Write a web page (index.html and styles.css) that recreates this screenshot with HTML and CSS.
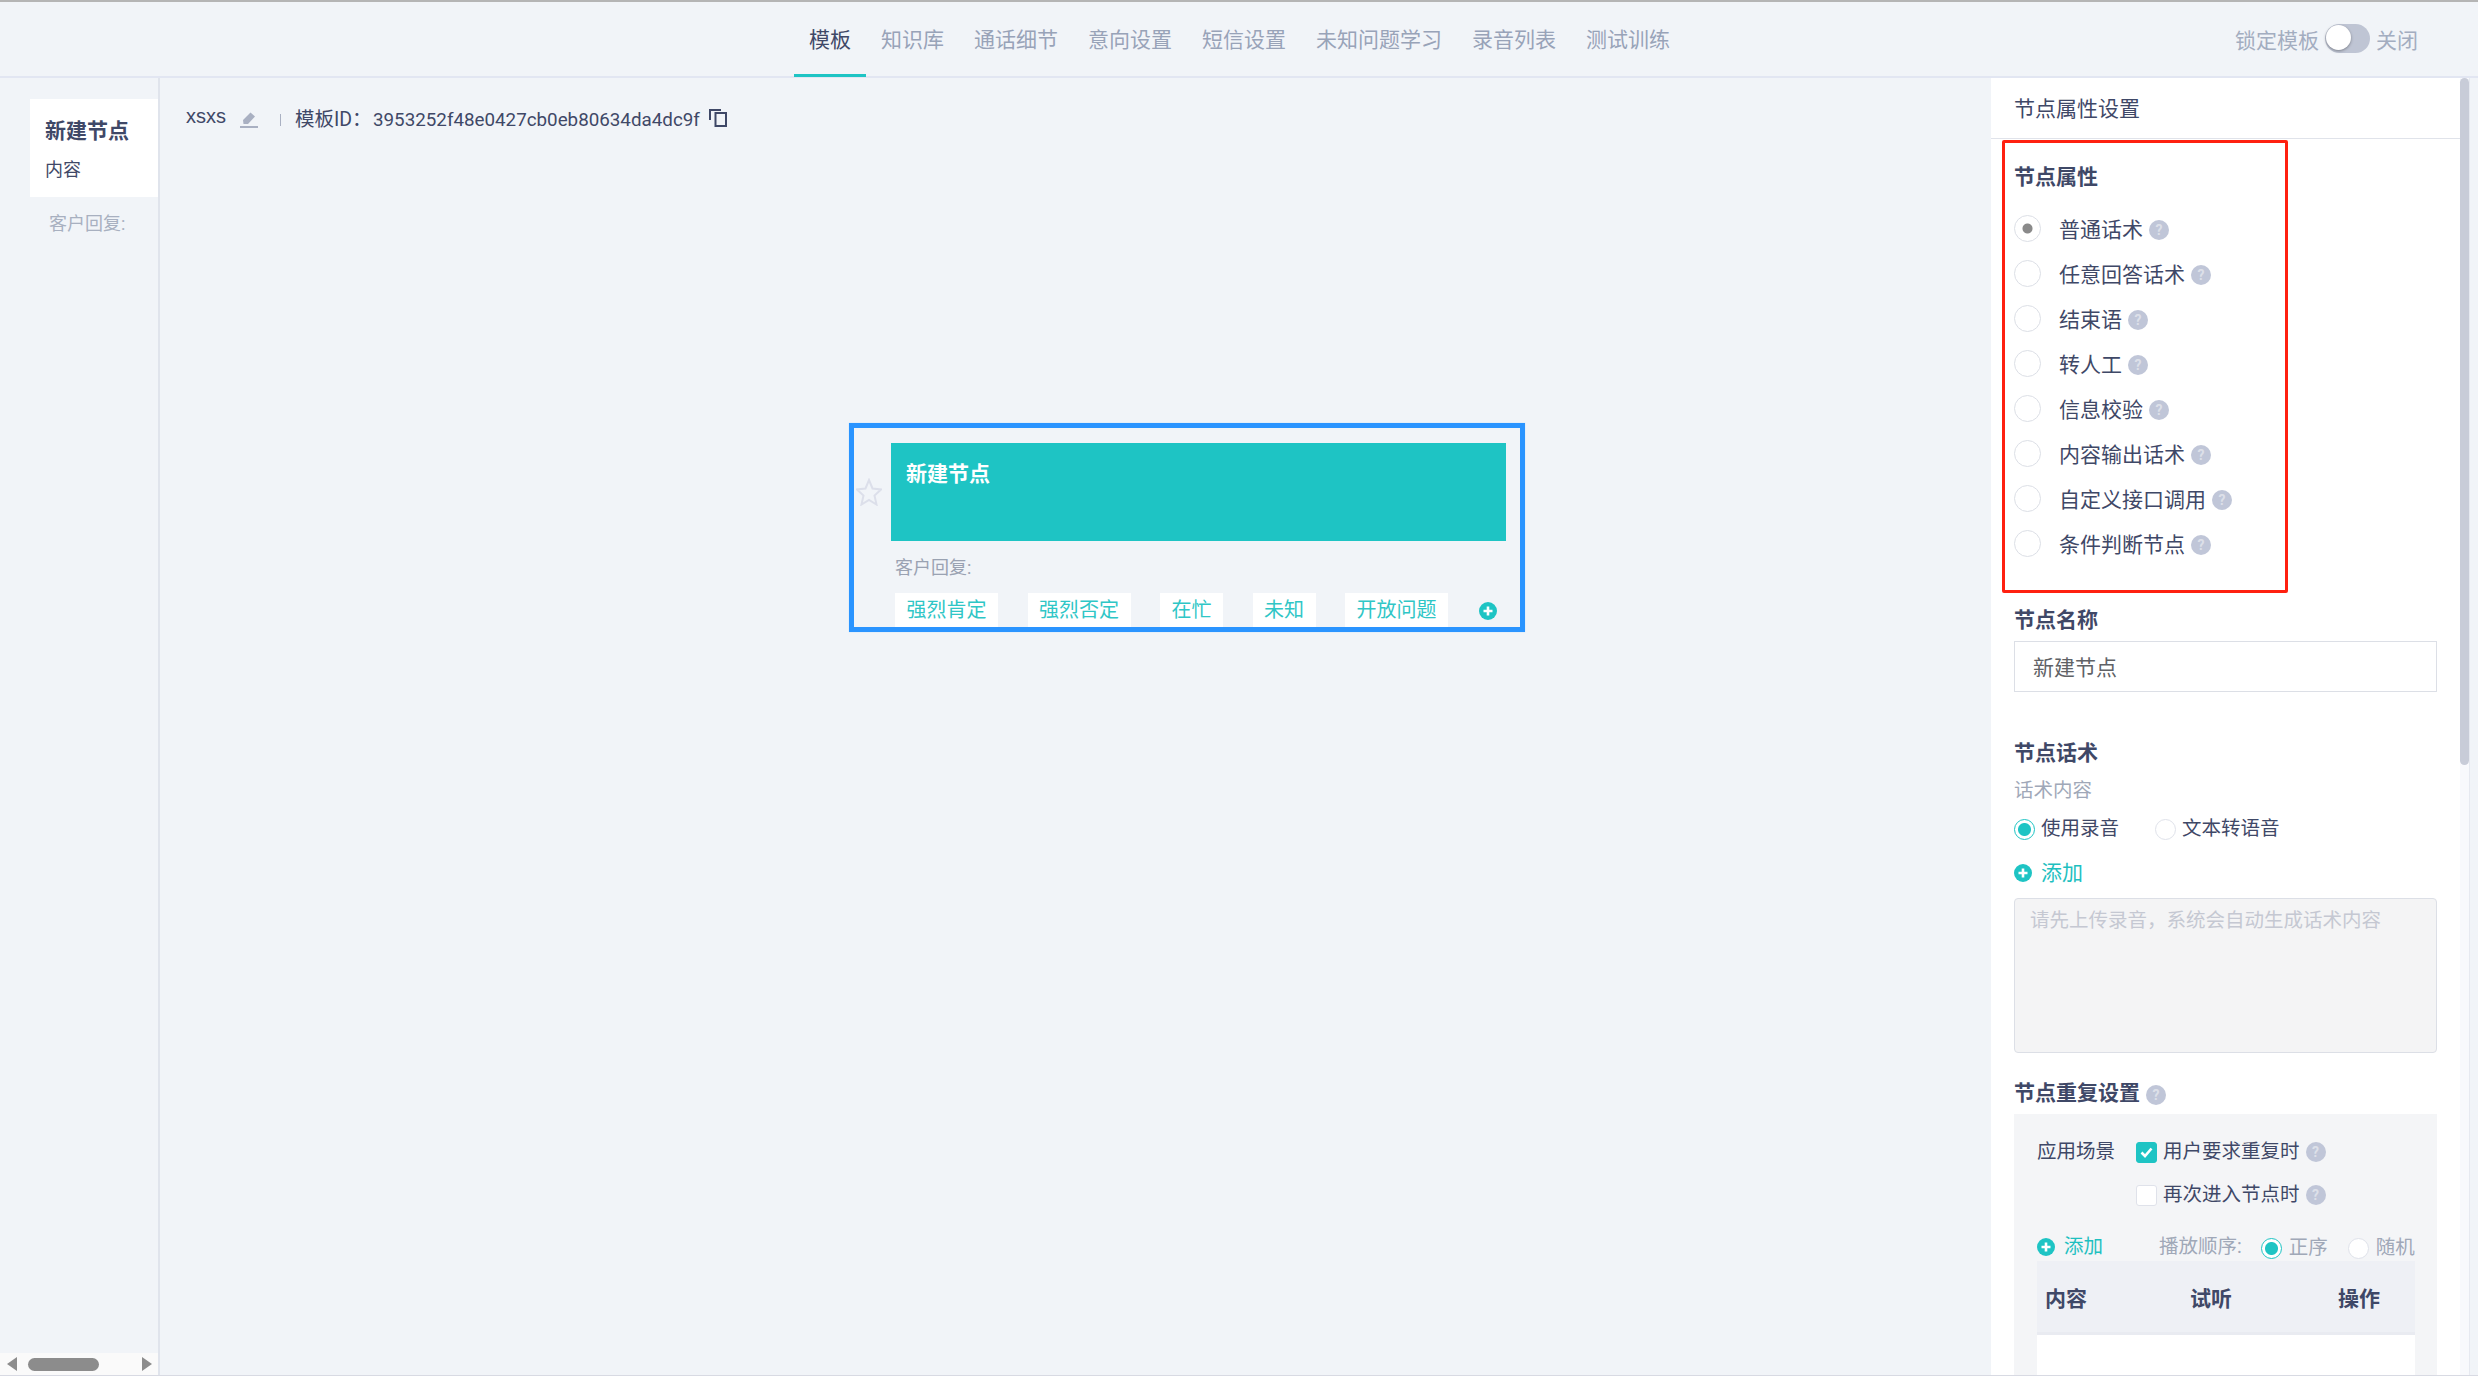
FILE: index.html
```html
<!DOCTYPE html>
<html lang="zh-CN">
  <head>
    <meta charset="UTF-8" />
    <title>模板</title>
    <link rel="stylesheet" href="styles.css">
  </head>
  <body>
    <div class="app">
      <!-- top tabs -->
      <header class="topbar">
        <nav class="tabs">
          <a class="tab active">模板</a>
          <a class="tab">知识库</a>
          <a class="tab">通话细节</a>
          <a class="tab">意向设置</a>
          <a class="tab">短信设置</a>
          <a class="tab">未知问题学习</a>
          <a class="tab">录音列表</a>
          <a class="tab">测试训练</a>
        </nav>
        <div class="lock">
          <span>锁定模板</span>
          <span class="switch"><i class="knob"></i></span>
          <span>关闭</span>
        </div>
      </header>

      <main class="main">
        <!-- node outline -->
        <aside class="sidebar">
          <div class="side-card">
            <div class="side-title">新建节点</div>
            <div class="side-sub">内容</div>
          </div>
          <div class="side-reply">客户回复:</div>
          <div class="hscroll">
            <svg class="arrow" width="10" height="14" viewBox="0 0 10 14"><path d="M10 0V14L0 7Z" /></svg>
            <i class="hscroll-thumb"></i>
            <svg class="arrow" width="10" height="14" viewBox="0 0 10 14"><path d="M0 0V14L10 7Z" /></svg>
          </div>
        </aside>

        <!-- flow canvas -->
        <section class="canvas">
          <div class="canvas-head">
            <span class="tpl-name">xsxs</span>
            <svg class="edit-icon" width="18" height="16" viewBox="0 0 18 16"><path d="M10.5 0.5 15 4.5 8 12H3.5L3 8ZM0 14H18V16H0Z" /></svg>
            <i class="head-divider"></i>
            <span class="tpl-id">模板ID：</span>
            <span class="tpl-hash">3953252f48e0427cb0eb80634da4dc9f</span>
            <svg class="copy-icon" width="18" height="18" viewBox="0 0 18 18"><path d="M1 11V1H12M6.5 4H17V17H6.5Z" /></svg>
          </div>

          <div class="node">
            <svg class="node-star" width="26" height="28" viewBox="0 0 26 28"><path d="M13 2 16.5 10.5 25 11.5 18.5 17.5 20.5 26.5 13 22 5.5 26.5 7.5 17.5 1 11.5 9.5 10.5Z" /></svg>
            <div class="node-head">新建节点</div>
            <div class="node-label">客户回复:</div>
            <div class="node-chips">
              <span class="chip">强烈肯定</span>
              <span class="chip">强烈否定</span>
              <span class="chip">在忙</span>
              <span class="chip">未知</span>
              <span class="chip">开放问题</span>
              <svg class="plus-icon chip-add" viewBox="0 0 18 18"><circle cx="9" cy="9" r="9" /><path d="M9 4.5V13.5M4.5 9H13.5" /></svg>
            </div>
          </div>
        </section>

        <!-- property panel -->
        <aside class="panel">
          <div class="panel-body">
            <div class="panel-title">节点属性设置</div>

            <div class="attr-box">
              <h3 class="sec-title">节点属性</h3>
              <ul class="attr-list">
                <li class="attr-row"><i class="attr-radio checked"></i>普通话术<i class="help">?</i></li>
                <li class="attr-row"><i class="attr-radio"></i>任意回答话术<i class="help">?</i></li>
                <li class="attr-row"><i class="attr-radio"></i>结束语<i class="help">?</i></li>
                <li class="attr-row"><i class="attr-radio"></i>转人工<i class="help">?</i></li>
                <li class="attr-row"><i class="attr-radio"></i>信息校验<i class="help">?</i></li>
                <li class="attr-row"><i class="attr-radio"></i>内容输出话术<i class="help">?</i></li>
                <li class="attr-row"><i class="attr-radio"></i>自定义接口调用<i class="help">?</i></li>
                <li class="attr-row"><i class="attr-radio"></i>条件判断节点<i class="help">?</i></li>
              </ul>
            </div>

            <div class="form-part name-part">
              <h3 class="sec-title">节点名称</h3>
              <div class="text-input">新建节点</div>
            </div>

            <div class="form-part speech-part">
              <h3 class="sec-title">节点话术</h3>
              <div class="field-label">话术内容</div>
              <div class="radio-row">
                <label class="radio-item"><i class="radio on"></i>使用录音</label>
                <label class="radio-item"><i class="radio"></i>文本转语音</label>
              </div>
              <a class="add-link">
                <svg class="plus-icon" viewBox="0 0 18 18"><circle cx="9" cy="9" r="9" /><path d="M9 4.5V13.5M4.5 9H13.5" /></svg>
                添加
              </a>
              <div class="text-area">请先上传录音，系统会自动生成话术内容</div>
            </div>

            <div class="form-part repeat-part">
              <h3 class="sec-title">节点重复设置<i class="help">?</i></h3>
              <div class="repeat-box">
                <div class="check-row">
                  <span class="check-label">应用场景</span>
                  <i class="checkbox on">
                    <svg width="13" height="11" viewBox="0 0 13 11"><path d="M1.5 5.5 5 9 11.5 1.5" /></svg>
                  </i>
                  用户要求重复时<i class="help">?</i>
                </div>
                <div class="check-row second">
                  <i class="checkbox"></i>
                  再次进入节点时<i class="help">?</i>
                </div>
                <div class="play-row">
                  <a class="add-link small">
                    <svg class="plus-icon" viewBox="0 0 18 18"><circle cx="9" cy="9" r="9" /><path d="M9 4.5V13.5M4.5 9H13.5" /></svg>
                    添加
                  </a>
                  <span class="play-label">播放顺序:</span>
                  <label class="radio-item muted"><i class="radio on"></i>正序</label>
                  <label class="radio-item muted"><i class="radio"></i>随机</label>
                </div>
                <table class="repeat-table">
                  <thead>
                    <tr><th class="col-content">内容</th><th class="col-listen">试听</th><th>操作</th></tr>
                  </thead>
                  <tbody>
                    <tr><td colspan="3"></td></tr>
                  </tbody>
                </table>
              </div>
            </div>
          </div>
          <div class="vscroll"><i class="vscroll-thumb"></i></div>
        </aside>
      </main>
    </div>
  </body>
</html>
```

FILE: styles.css
```css
* {
  box-sizing: border-box;
}
html,
body {
  margin: 0;
  height: 100%;
  overflow: hidden;
}
body {
  font-family: Roboto, "Noto Sans CJK SC", sans-serif;
  font-size: 20px;
  color: #3f4867;
  background-color: #f1f4f8;
}
i {
  font-style: normal;
}
.app {
  display: flex;
  flex-direction: column;
  height: 1376px;
  border-top: 2px solid #b5b5b5;
  border-bottom: 1px solid #d8dae3;
}

/* top tabs */
.topbar {
  display: flex;
  align-items: stretch;
  flex: none;
  height: 76px;
  padding-left: 794px;
  padding-right: 60px;
  border-bottom: 2px solid #e2e6f2;
}
.tabs {
  display: flex;
}
.tab {
  display: block;
  height: 75px;
  padding: 0 15px;
  font-size: 21px;
  line-height: 76px;
  color: #98a3b8;
}
.tab.active {
  color: #3f4867;
  border-bottom: 3px solid #1ec4c4;
}
.lock {
  display: flex;
  align-items: center;
  gap: 6px;
  margin-left: auto;
  height: 72px;
  font-size: 21px;
  color: #a3adc0;
}
.lock span:first-child,
.lock span:last-child {
  margin-top: 1px;
}
.switch {
  position: relative;
  display: block;
  width: 45px;
  height: 29px;
  background-color: #bfc5d4;
  border-radius: 15px;
}
.knob {
  position: absolute;
  left: 1px;
  top: 1px;
  width: 25px;
  height: 25px;
  background-color: #fff;
  border-radius: 50%;
  box-shadow: 0 1px 3px rgba(0, 0, 0, 0.35);
}

.main {
  display: flex;
  flex: 1;
  min-height: 0;
}

/* node outline */
.sidebar {
  display: flex;
  flex-direction: column;
  flex: none;
  width: 160px;
  padding-top: 21px;
  border-right: 2px solid #e0e4ec;
}
.side-card {
  height: 98px;
  margin-left: 30px;
  padding: 17px 0 0 15px;
  background-color: #fff;
}
.side-title {
  font-size: 21px;
  font-weight: 700;
  line-height: 30px;
}
.side-sub {
  margin-top: 11px;
  font-size: 18px;
  line-height: 26px;
}
.side-reply {
  margin-top: 14px;
  padding-left: 49px;
  font-size: 18px;
  line-height: 26px;
  color: #a8b0c0;
}
.hscroll {
  display: flex;
  align-items: center;
  justify-content: space-between;
  height: 22px;
  margin-top: auto;
  padding: 0 6px 0 7px;
  background-color: #fafafa;
}
.arrow {
  fill: #8c8c8c;
}
.hscroll-thumb {
  width: 71px;
  height: 13px;
  margin-right: 43px;
  margin-left: 10px;
  background-color: #8c8c8c;
  border-radius: 7px;
}

/* flow canvas */
.canvas {
  position: relative;
  flex: 1;
  padding: 26px 0 0 26px;
}
.canvas-head {
  display: flex;
  align-items: center;
  height: 28px;
}
.tpl-name {
  margin-bottom: 5px;
  font-family: "Liberation Sans", sans-serif;
  font-size: 20px;
  line-height: 26px;
}
.edit-icon {
  margin-left: 14px;
  margin-top: 3px;
  fill: #a9b0c2;
}
.head-divider {
  width: 1px;
  height: 12px;
  margin-left: 22px;
  margin-top: 3px;
  background-color: #a9b0c2;
}
.tpl-id {
  width: 78px;
  margin-left: 14px;
  margin-top: 3px;
  font-size: 19.5px;
  line-height: 30px;
  white-space: nowrap;
}
.tpl-hash {
  margin-top: 3px;
  font-size: 18.8px;
  line-height: 30px;
}
.copy-icon {
  margin-left: 9px;
  fill: none;
  stroke: #3f4867;
  stroke-width: 2;
}
.node {
  position: absolute;
  left: 689px;
  top: 345px;
  width: 676px;
  height: 209px;
  padding: 15px 0 0 37px;
  border: 5px solid #2a94ff;
  box-shadow: 0 0 1px #a9d2ff;
}
.node-star {
  position: absolute;
  left: 2px;
  top: 50px;
  fill: none;
  stroke: #dcdfea;
  stroke-width: 2;
}
.node-head {
  width: 615px;
  height: 98px;
  padding: 16px 0 0 15px;
  font-size: 21px;
  font-weight: 700;
  line-height: 30px;
  color: #fff;
  background-color: #1ec4c4;
}
.node-label {
  margin: 14px 0 0 4px;
  font-size: 18px;
  line-height: 26px;
  color: #9aa2b2;
}
.node-chips {
  display: flex;
  align-items: center;
  gap: 29.5px;
  margin: 12px 0 0 4px;
}
.chip {
  height: 34px;
  padding: 0 11.5px;
  font-size: 20px;
  line-height: 35px;
  color: #2fc6c6;
  background-color: #fff;
}
.plus-icon {
  display: block;
  flex: none;
  width: 18px;
  height: 18px;
  fill: #1ec4c4;
  stroke: #fff;
  stroke-width: 2.6;
}
.plus-icon circle {
  stroke: none;
}
.chip-add {
  margin: 2px 0 0 1px;
}

/* property panel */
.panel {
  display: flex;
  flex: none;
  width: 487px;
}
.panel-body {
  flex: 1;
  overflow: hidden;
  background-color: #fff;
}
.panel-title {
  height: 61px;
  margin-bottom: 1px;
  padding-left: 23px;
  font-size: 21px;
  line-height: 63px;
  border-bottom: 1px solid #e0e3ea;
}
.sec-title {
  display: flex;
  align-items: center;
  margin: 0;
  font-size: 21px;
  font-weight: 700;
  line-height: 30px;
}
.attr-box {
  width: 286px;
  height: 453px;
  margin-left: 11px;
  padding: 19px 0 0 9px;
  border: 3px solid #ff2010;
  border-radius: 2px;
}
.attr-list {
  margin: 13px 0 0;
  padding: 0;
  list-style: none;
}
.attr-row {
  display: flex;
  align-items: center;
  height: 45px;
  font-size: 21px;
}
.attr-radio {
  flex: none;
  width: 27px;
  height: 27px;
  margin-right: 18px;
  margin-bottom: -1px;
  border: 1px solid #dcdfe6;
  border-radius: 50%;
}
.attr-radio.checked {
  background: radial-gradient(circle, #8a8a8a 0, #8a8a8a 4.5px, transparent 5.5px);
}
.help {
  flex: none;
  width: 20px;
  height: 20px;
  margin: 4px 0 0 6px;
  font-size: 14px;
  font-weight: 700;
  line-height: 20px;
  text-align: center;
  color: #dde0e9;
  background-color: #c0c6d8;
  border-radius: 50%;
}
.form-part {
  padding-left: 23px;
  padding-right: 23px;
}
.name-part {
  margin-top: 12px;
}
.text-input {
  height: 51px;
  margin-top: 6px;
  padding-left: 18px;
  font-size: 21px;
  line-height: 52px;
  color: #606266;
  border: 1px solid #dcdfe6;
}
.speech-part {
  margin-top: 46px;
}
.field-label {
  margin-top: 9px;
  line-height: 28px;
  font-size: 19.5px;
  color: #a0a8b8;
}
.radio-row {
  display: flex;
  gap: 36px;
  margin-top: 10px;
}
.radio-item {
  display: flex;
  align-items: center;
  font-size: 19.5px;
  line-height: 28px;
}
.radio-item.muted {
  margin-top: 2px;
  color: #a0a8b8;
}
.radio-item.muted .radio {
  margin-right: 7px;
}
.radio {
  flex: none;
  width: 21px;
  height: 21px;
  margin-right: 6px;
  background-color: #fff;
  border: 1px solid #dfe2ea;
  border-radius: 50%;
}
.radio.on {
  border-color: #1ec4c4;
  background: radial-gradient(circle, #1ec4c4 0, #1ec4c4 6px, #fff 7px);
}
.add-link {
  display: flex;
  align-items: center;
  gap: 9px;
  margin-top: 16px;
  font-size: 21px;
  line-height: 28px;
  color: #1ec0c0;
}
.add-link.small {
  margin-top: 0;
  font-size: 19.5px;
}
.text-area {
  height: 155px;
  margin-top: 11px;
  padding: 8px 15px;
  font-size: 19.5px;
  line-height: 28px;
  color: #c5c8d2;
  background-color: #f4f4f5;
  border: 1px solid #dcdfe6;
  border-radius: 4px;
}
.repeat-part {
  margin-top: 25px;
}
.repeat-box {
  height: 262px;
  margin-top: 6px;
  padding: 24px 22px 0 23px;
  background-color: #f4f5f7;
}
.check-row {
  display: flex;
  align-items: center;
  font-size: 19.5px;
  line-height: 28px;
}
.check-row.second {
  margin-top: 15px;
  padding-left: 99px;
}
.check-label {
  width: 99px;
}
.checkbox {
  display: flex;
  align-items: center;
  justify-content: center;
  flex: none;
  width: 21px;
  height: 21px;
  margin-right: 6px;
  background-color: #fff;
  border: 1px solid #dfe2ea;
  border-radius: 3px;
}
.checkbox.on {
  background-color: #1ec4c4;
  border-color: #1ec4c4;
}
.checkbox svg {
  fill: none;
  stroke: #fff;
  stroke-width: 2.6;
}
.check-row .help {
  margin-top: 0;
}
.play-row {
  display: flex;
  align-items: center;
  height: 28px;
  margin-top: 24px;
}
.play-label {
  margin-left: 56px;
  margin-right: 19px;
  font-size: 19.5px;
  line-height: 28px;
  color: #a0a8b8;
}
.play-row .radio-item + .radio-item {
  margin-left: 20px;
}
.repeat-table {
  width: 100%;
  margin-top: 0;
  border-collapse: collapse;
  table-layout: fixed;
  background-color: #fff;
}
.repeat-table th {
  height: 72px;
  padding: 2px 0 0 8px;
  font-size: 21px;
  text-align: left;
  background-color: #eef0f5;
  border-bottom: 3px solid #e9ebf1;
}
.col-content {
  width: 145px;
}
.col-listen {
  width: 148px;
}
.repeat-table td {
  height: 60px;
}
.vscroll {
  flex: none;
  width: 10px;
  margin-right: 8px;
  background-color: #f8f9fc;
  border-right: 1px solid #e6e9f0;
}
.vscroll-thumb {
  display: block;
  height: 687px;
  background-color: #c8ccd8;
  border-radius: 5px;
}
```
